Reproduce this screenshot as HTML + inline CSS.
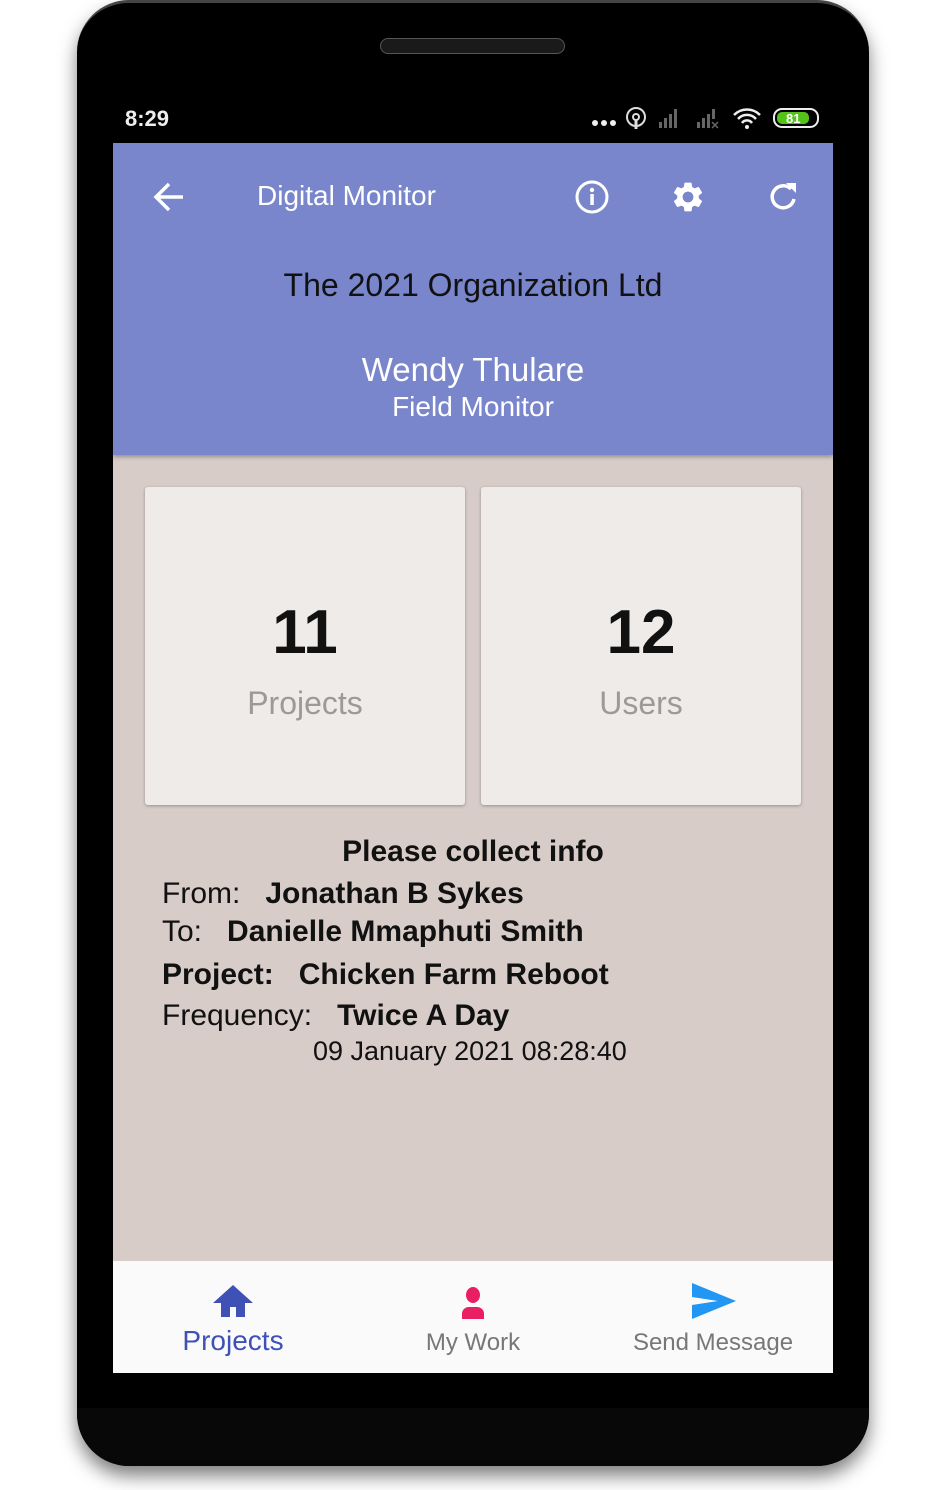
<!DOCTYPE html>
<html><head><meta charset="utf-8"><style>
body{margin:0;width:945px;height:1490px;background:#fff;position:relative;overflow:hidden;font-family:"Liberation Sans",sans-serif}
.phone{position:absolute;left:77px;top:0;width:792px;height:1466px;background:#000;border-radius:52px;box-shadow:0 10px 18px rgba(0,0,0,.5);border-top:3px solid #444;box-sizing:border-box}
.chin{position:absolute;left:77px;top:1408px;width:792px;height:58px;background:#080808;border-radius:0 0 52px 52px}
.spk{position:absolute;left:380px;top:38px;width:185px;height:16px;border-radius:8px;background:#1a1a1a;border:1px solid #555;box-sizing:border-box}
.abs{position:absolute}
.screen{position:absolute;left:113px;top:143px;width:720px;height:1230px;background:#D7CCC8;overflow:hidden}
.hdr{position:absolute;left:0;top:0;width:720px;height:312px;background:#7986CB;box-shadow:0 2px 4px rgba(0,0,0,.3)}
.card{position:absolute;top:344px;width:320px;height:318px;background:#EFEBE9;border-radius:3px;box-shadow:0 1px 3px rgba(0,0,0,.3);text-align:center}
.num{position:absolute;top:110px;width:100%;font-size:62px;font-weight:bold;color:#111}
.lbl{position:absolute;top:198px;width:100%;font-size:32px;color:#9a9a9a}
.t{position:absolute;font-size:30px;color:#111;white-space:nowrap}
b{font-weight:bold}
.nav{position:absolute;left:0;top:1118px;width:720px;height:112px;background:#fafafa}
</style></head><body>
<div class="phone"></div>
<div class="chin"></div>
<div class="spk"></div>
<div class="abs" style="left:125px;top:106px;color:#eee;font-size:22px;font-weight:bold">8:29</div>
<svg class="abs" style="left:590px;top:118px" width="30" height="10"><circle cx="5" cy="5" r="3" fill="#eee"/><circle cx="14" cy="5" r="3" fill="#eee"/><circle cx="23" cy="5" r="3" fill="#eee"/></svg>
<svg class="abs" style="left:622px;top:106px" width="200" height="26">
<circle cx="14" cy="11" r="9" fill="none" stroke="#ddd" stroke-width="2"/><circle cx="14" cy="11" r="3" fill="none" stroke="#ddd" stroke-width="2"/><path d="M14 13v10" stroke="#ddd" stroke-width="3"/>
<g fill="#666"><rect x="37" y="16" width="3" height="6"/><rect x="42" y="12" width="3" height="10"/><rect x="47" y="8" width="3" height="14"/><rect x="52" y="3" width="3" height="19"/>
<rect x="75" y="16" width="3" height="6"/><rect x="80" y="12" width="3" height="10"/><rect x="85" y="8" width="3" height="14"/><rect x="90" y="3" width="3" height="10"/><path d="M90 16l6 6M96 16l-6 6" stroke="#666" stroke-width="1.5"/></g>
<path d="M112 9a18 18 0 0 1 26 0M116 13a12 12 0 0 1 18 0M120 17a6 6 0 0 1 10 0" stroke="#eee" stroke-width="2.5" fill="none"/><circle cx="125" cy="21" r="2" fill="#eee"/>
<rect x="152" y="3" width="44" height="18" rx="8" fill="none" stroke="#eee" stroke-width="2"/><rect x="155" y="6" width="32" height="12" rx="5" fill="#55c21a"/><text x="164" y="17" font-size="13" font-weight="bold" fill="#fff" font-family="Liberation Sans">81</text>
</svg>
<div class="screen">
<div class="hdr">
<svg class="abs" style="left:38px;top:36px" width="36" height="36"><path d="M32 18H6M18 5L5 18l13 13" stroke="#fff" stroke-width="3.5" fill="none"/></svg>
<div class="abs" style="left:144px;top:37px;color:#fff;font-size:28px">Digital Monitor</div>
<svg class="abs" style="left:461px;top:36px" width="36" height="36"><circle cx="18" cy="18" r="15" fill="none" stroke="#fff" stroke-width="3"/><rect x="16.3" y="15" width="3.5" height="11" fill="#fff"/><circle cx="18" cy="11" r="2.2" fill="#fff"/></svg>
<svg class="abs" style="left:557px;top:36px" width="36" height="36" viewBox="0 0 24 24"><path fill="#fff" d="M19.14 12.94c.04-.3.06-.61.06-.94 0-.32-.02-.64-.07-.94l2.030-1.58a.49.49 0 0 0 .12-.61l-1.92-3.32a.49.49 0 0 0-.59-.22l-2.39.96c-.5-.38-1.030-.7-1.62-.94l-.36-2.54a.48.48 0 0 0-.48-.41h-3.84c-.24 0-.43.17-.47.41l-.36 2.54c-.59.24-1.13.57-1.62.94l-2.39-.96a.49.49 0 0 0-.59.22L2.74 8.87c-.12.21-.08.47.12.61l2.03 1.58c-.05.3-.09.63-.09.94s.02.64.07.94l-2.03 1.58a.49.49 0 0 0-.12.61l1.92 3.32c.12.22.37.29.59.22l2.39-.96c.5.38 1.03.7 1.62.94l.36 2.54c.05.24.24.41.48.41h3.84c.24 0 .44-.17.47-.41l.36-2.54c.59-.24 1.13-.56 1.62-.94l2.39.96c.22.08.47 0 .59-.22l1.92-3.32c.12-.22.07-.47-.12-.61l-2.01-1.58zM12 15.6A3.6 3.6 0 1 1 12 8.4a3.6 3.6 0 0 1 0 7.2z"/></svg>
<svg class="abs" style="left:653px;top:36px" width="36" height="36"><path d="M28 20A11 11 0 1 1 25 10" stroke="#fff" stroke-width="3.5" fill="none"/><path d="M20 4h10v10z" fill="#fff"/></svg>
<div class="abs" style="left:0;top:124px;width:720px;text-align:center;font-size:32px;color:#111">The 2021 Organization Ltd</div>
<div class="abs" style="left:0;top:208px;width:720px;text-align:center;font-size:33px;color:#fff">Wendy Thulare</div>
<div class="abs" style="left:0;top:248px;width:720px;text-align:center;font-size:28px;color:#fff">Field Monitor</div>
</div>
<div class="card" style="left:32px"><div class="num">11</div><div class="lbl">Projects</div></div>
<div class="card" style="left:368px"><div class="num">12</div><div class="lbl">Users</div></div>
<div class="t" style="left:0;width:720px;text-align:center;top:692px"><b>Please collect info</b></div>
<div class="t" style="left:49px;top:734px">From:&nbsp;&nbsp; <b>Jonathan B Sykes</b></div>
<div class="t" style="left:49px;top:772px">To:&nbsp;&nbsp; <b>Danielle Mmaphuti Smith</b></div>
<div class="t" style="left:49px;top:815px"><b>Project:&nbsp;&nbsp; Chicken Farm Reboot</b></div>
<div class="t" style="left:49px;top:856px">Frequency:&nbsp;&nbsp; <b>Twice A Day</b></div>
<div class="t" style="left:200px;top:893px;font-size:27px">09 January 2021 08:28:40</div>
<div class="nav">
<svg class="abs" style="left:100px;top:22px" width="40" height="36"><path d="M20 2L0 20h8v14h9v-10h6v10h9V20h8z" fill="#3F51B5"/></svg>
<div class="abs" style="left:0;width:240px;text-align:center;top:64px;font-size:28px;color:#3F51B5">Projects</div>
<svg class="abs" style="left:342px;top:24px" width="36" height="36"><ellipse cx="18" cy="10" rx="7" ry="8" fill="#E91E63"/><path d="M7 34v-6a7 7 0 0 1 7-6h8a7 7 0 0 1 7 6v6z" fill="#E91E63"/></svg>
<div class="abs" style="left:240px;width:240px;text-align:center;top:68px;font-size:24px;color:#777">My Work</div>
<svg class="abs" style="left:579px;top:22px" width="44" height="38"><path d="M0 0L44 18L0 36V22L26 18L0 14z" fill="#2196F3"/></svg>
<div class="abs" style="left:480px;width:240px;text-align:center;top:68px;font-size:24px;color:#777">Send Message</div>
</div>
</div>
</body></html>
